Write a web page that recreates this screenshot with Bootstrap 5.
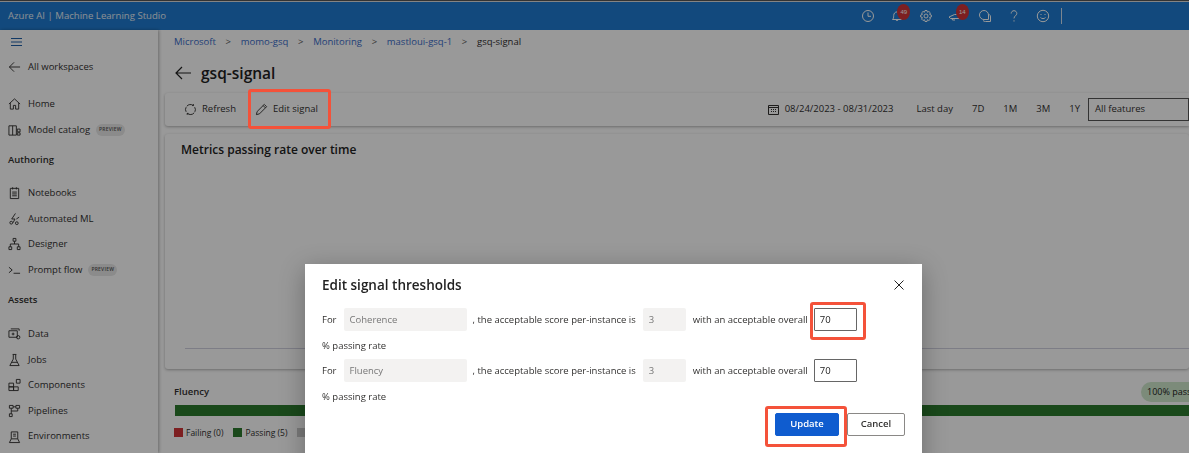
<!DOCTYPE html>
<html lang="en">
<head>
<meta charset="utf-8">
<title>gsq-signal</title>
<link rel="stylesheet" href="https://cdn.jsdelivr.net/npm/bootstrap@5.3.0/dist/css/bootstrap.min.css">
<style>
html,body{height:453px;overflow:hidden;}
body{font-family:"Open Sans","Noto Sans",sans-serif;font-size:9.5px;color:#323130;background:#fff;}
.topline{height:2px;background:#555;border-bottom:1px solid #ddd;}
.studio-bar{height:28px;background:#1f7bd0;padding:0 0 0 8px;color:#fff;flex-wrap:nowrap;}
.studio-brand{font-size:9.6px;color:#e6eef6;margin:0;padding:0;}
.bar-tools{gap:0;margin-right:127px;}
.bar-tool{width:29.3px;display:flex;justify-content:center;position:relative;}
.bar-tool svg{width:14px;height:14px;fill:none;stroke:#fff;stroke-width:1;}
.bar-badge{position:absolute;top:-5px;left:15px;width:13px;height:16px;border-radius:50%;background:#d13438;color:#fff;font-size:6px;display:flex;align-items:center;justify-content:center;font-family:"Liberation Sans",sans-serif;}
.bar-sep{width:1px;height:16px;background:#cfe0f0;margin-left:3px;}
.page-wrap{height:423px;}
.side-nav{width:158px;flex:none;background:#fff;box-shadow:1px 0 3px rgba(0,0,0,.3);padding-left:8px;color:#323130;position:relative;}
.ham{height:14.5px;margin-top:5px;display:flex;align-items:center;padding-left:3px;}
.ham svg{width:11px;height:8px;stroke:#1f5fa8;stroke-width:1;}
.side-row{height:25.6px;display:flex;align-items:center;gap:7px;font-size:9.5px;white-space:nowrap;}
.side-row svg{width:13px;height:14px;flex:none;fill:none;stroke:#323130;stroke-width:1;}
.side-head{font-weight:600;height:25.6px;display:flex;align-items:center;font-size:9.5px;}
.side-gap-a{margin-top:5px;margin-bottom:11.5px;}
.side-head-a{margin-top:5px;margin-bottom:7px;}
.side-head-b{margin-top:5px;margin-bottom:8px;}
.preview-tag{font-size:5px;background:#e8e8e8;border-radius:8px;padding:2px 3px;color:#555;letter-spacing:.2px;font-weight:600;margin-left:-1px;}
.main-col{min-width:0;padding-left:7px;}
.crumbs{--bs-breadcrumb-divider:'>';--bs-breadcrumb-margin-bottom:0;--bs-breadcrumb-item-padding-x:9.7px;height:23px;margin:0;padding:5px 0 0 9px;font-size:9.5px;flex-wrap:nowrap;}
.crumbs .breadcrumb-item a{color:#3a6cc8;text-decoration:none;}
.crumbs .breadcrumb-item.active{color:#323130;}
.crumbs .breadcrumb-item+.breadcrumb-item::before{color:#555;}
.title-row{height:40px;padding-left:10px;gap:10px;}
.title-row svg{width:16px;height:14px;stroke:#222;stroke-width:1.2;fill:none;}
.title-row h1{font-size:15.5px;font-weight:600;margin:0;color:#222;}
.tool-card{height:33px;background:#fff;border-radius:3px 0 0 3px;box-shadow:0 1px 3px rgba(0,0,0,.3);padding-left:19px;margin-bottom:8px;}
.tool-btn{font-size:9.5px;padding:0;border:0;display:flex;align-items:center;gap:5px;color:#323130;background:none;border-radius:0;}
.tool-btn svg{width:13px;height:13px;fill:none;stroke:#323130;stroke-width:1;}
.edit-gap{margin-left:19px;}
.range{margin-left:auto;gap:0;}
.range-date{gap:6px;margin-right:23px;}
.range-date svg{width:11px;height:11px;fill:none;stroke:#323130;stroke-width:1;}
.range-pill{margin-right:19px;}
.range-pill:last-of-type{margin-right:7px;}
.feat-select{width:101px;height:23px;border:1px solid #555;background:#fff;padding:0 6px;display:flex;align-items:center;font-size:9.5px;margin-left:1px;}
.chart-card{height:235px;background:#fff;border-radius:3px;box-shadow:0 1px 3px rgba(0,0,0,.3);padding:8px 0 0 16px;display:flex;flex-direction:column;margin-bottom:5px;}
.chart-card h2{font-size:12px;font-weight:600;margin:0;color:#222;line-height:16px;}
.chart-axis{margin-top:auto;margin-bottom:20px;height:1px;background:#d0d0e0;margin-left:4px;}
.fluency-card{height:90px;background:#fff;border-radius:3px;padding:8px 0 0 9px;}
.fluency-head{height:20px;font-weight:600;font-size:9.5px;}
.pass-pill{background:#cfe8cc;border-radius:10px 0 0 10px;height:20px;width:48px;padding-left:6px;font-size:9px;font-weight:400;display:flex;align-items:center;white-space:nowrap;color:#222;flex:none;}
.pass-track{height:11px;background:#2c7a2e;border-radius:0;margin:3px 0 11px 1px;}
.legend-row{gap:10px;font-size:8.5px;}
.legend-key{width:9px;height:9px;display:inline-block;margin-right:3px;vertical-align:-1px;}
.key-red{background:#d13438;}.key-green{background:#2c7a2e;}.key-grey{background:#ccc;}
.modal-backdrop.show{opacity:.4;}
.sig-dialog{position:absolute;left:305px;top:264px;width:617px;height:205px;z-index:1060;background:#fff;border:0;border-radius:0;padding:11px 17px;box-shadow:0 6px 24px rgba(0,0,0,.3);font-size:9.5px;color:#323130;}
.sig-head{height:20px;margin-bottom:13px;}
.sig-head h3{font-size:13.5px;font-weight:600;margin:0;color:#222;}
.sig-x{width:10px;height:10px;padding:0;border:0;background:none;margin-right:1px;display:flex;}
.sig-x svg{width:10px;height:10px;stroke:#222;stroke-width:1;}
.sig-row{height:23px;gap:0;white-space:nowrap;}
.sig-txt{padding-top:2px;}
.sig-ro{height:23px;background:#f3f2f1;border:0;border-radius:2px;font-size:9.5px;padding:2px 6px 0;color:#777;display:flex;align-items:center;}
.sig-ro.lg{width:123px;margin:0 6px 0 7px;}
.sig-ro.sm{width:43px;margin:0 7px;}
.sig-in{width:43px;height:23px;border:1px solid #666;border-radius:1px;padding:0 5px;font-size:9.5px;color:#222;margin-left:6px;min-height:0;box-shadow:none;}
.sig-line{height:27.5px;display:flex;align-items:center;padding-top:3px;}
.sig-actions{gap:8px;margin-top:3.5px;margin-right:0;}
.sig-primary{--bs-btn-bg:#0f5ccf;--bs-btn-border-color:#0f5ccf;width:64px;height:23px;padding:0;font-size:9.5px;font-weight:600;border-radius:2px;}
.sig-cancel{width:58px;height:23px;padding:0;font-size:9.5px;font-weight:600;border:1px solid #8a8886;border-radius:2px;background:#fff;color:#323130;}
.mark-box{position:absolute;border:3px solid #f4523a;border-radius:3px;z-index:1070;pointer-events:none;}
.mark-edit{left:248px;top:89px;width:83px;height:40px;}
.mark-seventy{left:810px;top:302px;width:56px;height:38px;}
.mark-update{left:765px;top:406px;width:82px;height:41px;}
</style>
</head>
<body>
<div class="topline"></div>
<nav class="navbar studio-bar d-flex justify-content-between align-items-center">
  <span class="navbar-brand studio-brand">Azure AI | Machine Learning Studio</span>
  <div class="d-flex align-items-center bar-tools">
    <span class="bar-tool"><svg viewBox="0 0 14 14"><circle cx="7" cy="7" r="5.5"/><path d="M7 3.5V7.3H10"/></svg></span>
    <span class="bar-tool"><svg viewBox="0 0 14 14"><path d="M2.5 10.5c1-1 1.2-2 1.2-4 0-2 1.4-3.6 3.3-3.6s3.300 1.600 3.300 3.600c0 2 .2 3 1.200 4z"/><path d="M5.800 10.800a1.300 1.300 0 0 0 2.400 0"/></svg><span class="bar-badge">49</span></span>
    <span class="bar-tool"><svg viewBox="0 0 14 14"><circle cx="7" cy="7" r="2"/><path d="M6 1.500h2l.4 1.700 1.500-.7 1.500 1.400-.8 1.500 1.700.6v2l-1.700.5.800 1.600-1.500 1.400-1.500-.8-.4 1.800H6l-.5-1.800-1.500.8-1.400-1.400.8-1.600-1.700-.5V6l1.700-.6-.8-1.500L4 2.500l1.500.7z"/></svg></span>
    <span class="bar-tool"><svg viewBox="0 0 14 14"><path d="M1 8l5.500-2.500h2l3 .5v3.500H2.500z"/><path d="M4 9.500l.5 1.500h2.500"/></svg><span class="bar-badge">14</span></span>
    <span class="bar-tool"><svg viewBox="0 0 14 14"><path d="M6 1.500a4.500 4.500 0 1 0 0 9h4.500V6A4.500 4.500 0 0 0 6 1.500z"/><path d="M11.500 5.500c.7.700 1 1.500 1 2.500v4.500H7.500c-1 0-1.800-.3-2.500-1"/></svg></span>
    <span class="bar-tool"><svg viewBox="0 0 14 14"><path d="M4.200 4.500C4.200 2.800 5.500 1.700 7 1.700s2.800 1.100 2.800 2.700c0 2.300-2.800 2.500-2.800 5"/><path d="M7 11.300v1.200"/></svg></span>
    <span class="bar-tool"><svg viewBox="0 0 14 14"><circle cx="7" cy="7" r="5.700"/><path d="M4.500 8.500c1.200 1.500 3.800 1.500 5 0M5 5v1M9 5v1"/></svg></span>
    <span class="bar-sep"></span>
  </div>
</nav>
<div class="d-flex page-wrap">
  <aside class="side-nav">
    <div class="ham"><svg viewBox="0 0 11 8"><path d="M0 .5h11M0 4h11M0 7.500h11"/></svg></div>
    <div class="side-row side-gap-a"><svg viewBox="0 0 14 14"><path d="M13 7H1.500M6.500 2L1.500 7l5 5"/></svg>All workspaces</div>
    <div class="side-row"><svg viewBox="0 0 14 14"><path d="M1 7l6-5.500L13 7M2.500 6v6.500h3.300V8.500h2.400v4h3.300V6"/></svg>Home</div>
    <div class="side-row"><svg viewBox="0 0 14 14"><path d="M1 2.500h8v10H1zM5 2.500v10"/><path d="M10 6h3v3h-3zM10 10h3v2.500h-3z"/></svg>Model catalog <span class="preview-tag">PREVIEW</span></div>
    <div class="side-head side-head-a">Authoring</div>
    <div class="side-row"><svg viewBox="0 0 14 14"><path d="M2.500 2h9v11h-9zM5 .8v2.400M9 .8v2.400M4.500 6h5M4.500 8h5M4.500 10h5"/></svg>Notebooks</div>
    <div class="side-row"><svg viewBox="0 0 14 14"><path d="M8 1L4 7h3.500L5.500 11M9 7l3-2M2 11a1.500 1.500 0 1 0 3 0 1.500 1.500 0 1 0-3 0M8 11.500a1.500 1.500 0 1 0 3 0 1.500 1.500 0 1 0-3 0"/></svg>Automated ML</div>
    <div class="side-row"><svg viewBox="0 0 14 14"><path d="M5.500 1h3v3h-3zM1 10h3v3H1zM10 10h3v3h-3zM7 4v3M2.500 10V7h9v3"/></svg>Designer</div>
    <div class="side-row"><svg viewBox="0 0 14 14"><path d="M1 4l3.500 3L1 10M6 10.500h7"/></svg>Prompt flow <span class="preview-tag">PREVIEW</span></div>
    <div class="side-head side-head-b">Assets</div>
    <div class="side-row"><svg viewBox="0 0 14 14"><path d="M1 3.500h9v7H1zM3 1.500h9v2M4 7h3M5.500 5.500v3"/><circle cx="11" cy="10.500" r="1.800"/></svg>Data</div>
    <div class="side-row"><svg viewBox="0 0 14 14"><path d="M5 1h4M5.700 1v5L2 13h10L8.300 6V1M4 9.500h6"/></svg>Jobs</div>
    <div class="side-row"><svg viewBox="0 0 14 14"><path d="M1 5h5v4H1zM1 9h5v4H1zM6 9h5v4H6zM9 1h4v4H9z"/></svg>Components</div>
    <div class="side-row"><svg viewBox="0 0 14 14"><path d="M1.500 1h4v3h-4zM8.500 1h4v3h-4zM1.500 10h3v3h-3zM3.500 4v6M5.500 2.500h3M3.500 7h7V4"/></svg>Pipelines</div>
    <div class="side-row"><svg viewBox="0 0 14 14"><path d="M3.500 1.500h7v7.500h-7zM3.500 9L1.500 13h11l-2-4M5.500 4h3M5.500 6h3"/></svg>Environments</div>
  </aside>
  <main class="main-col flex-grow-1">
    <nav aria-label="breadcrumb">
      <ol class="breadcrumb crumbs">
        <li class="breadcrumb-item"><a href="#">Microsoft</a></li>
        <li class="breadcrumb-item"><a href="#">momo-gsq</a></li>
        <li class="breadcrumb-item"><a href="#">Monitoring</a></li>
        <li class="breadcrumb-item"><a href="#">mastloui-gsq-1</a></li>
        <li class="breadcrumb-item active" aria-current="page">gsq-signal</li>
      </ol>
    </nav>
    <div class="d-flex align-items-center title-row">
      <svg viewBox="0 0 16 14"><path d="M16 7H1M7 1L1 7l6 6"/></svg>
      <h1>gsq-signal</h1>
    </div>
    <div class="d-flex align-items-center tool-card">
      <button class="btn tool-btn" type="button"><svg viewBox="0 0 14 14"><path d="M3 3.500a5 5 0 0 1 7-.8M11.500 4.500a5 5 0 0 1 .2 5M11 10.500a5 5 0 0 1-7.500.5M2.300 9.500a5 5 0 0 1 0-5M8.800 2.800l1.500-.1-.2-1.500M4.800 11.200l-1.500.1.200 1.500"/></svg>Refresh</button>
      <button class="btn tool-btn edit-gap" type="button"><svg viewBox="0 0 14 14"><path d="M1.500 12.500l.8-3.300L10 1.500l2.500 2.500-7.700 7.700zM8.800 2.800l2.400 2.400"/></svg>Edit signal</button>
      <div class="d-flex align-items-center range">
        <span class="d-flex align-items-center range-date"><svg viewBox="0 0 11 11"><path d="M.5 1.500h10v9H.5zM.5 3.500h10M3 5.500h1M5 5.500h1M7 5.500h1M3 7.500h1M5 7.500h1M7 7.500h1"/></svg>08/24/2023 - 08/31/2023</span>
        <span class="range-pill">Last day</span>
        <span class="range-pill">7D</span>
        <span class="range-pill">1M</span>
        <span class="range-pill">3M</span>
        <span class="range-pill">1Y</span>
        <div class="feat-select">All features</div>
      </div>
    </div>
    <section class="chart-card">
      <h2>Metrics passing rate over time</h2>
      <div class="chart-axis"></div>
    </section>
    <section class="fluency-card">
      <div class="d-flex justify-content-between align-items-center fluency-head">
        <span>Fluency</span>
        <span class="pass-pill">100% pass</span>
      </div>
      <div class="pass-track"></div>
      <div class="d-flex legend-row">
        <span><i class="legend-key key-red"></i>Failing (0)</span>
        <span><i class="legend-key key-green"></i>Passing (5)</span>
        <span><i class="legend-key key-grey"></i>Not applicable (0)</span>
      </div>
    </section>
  </main>
</div>
<div class="modal-backdrop show"></div>
<div class="modal-content sig-dialog" role="dialog" aria-label="Edit signal thresholds">
  <div class="d-flex justify-content-between align-items-center sig-head">
    <h3>Edit signal thresholds</h3>
    <button class="sig-x" type="button" aria-label="Close"><svg viewBox="0 0 10 10"><path d="M.5 .5l9 9M9.500 .5l-9 9"/></svg></button>
  </div>
  <div class="d-flex align-items-center sig-row"><span class="sig-txt">For</span><span class="sig-ro lg">Coherence</span><span class="sig-txt">, the acceptable score per-instance is</span><span class="sig-ro sm">3</span><span class="sig-txt">with an acceptable overall</span><input class="form-control sig-in" value="70" aria-label="Coherence threshold"></div>
  <div class="sig-line">% passing rate</div>
  <div class="d-flex align-items-center sig-row"><span class="sig-txt">For</span><span class="sig-ro lg">Fluency</span><span class="sig-txt">, the acceptable score per-instance is</span><span class="sig-ro sm">3</span><span class="sig-txt">with an acceptable overall</span><input class="form-control sig-in" value="70" aria-label="Fluency threshold"></div>
  <div class="sig-line">% passing rate</div>
  <div class="d-flex justify-content-end sig-actions">
    <button class="btn btn-primary sig-primary" type="button">Update</button>
    <button class="btn sig-cancel" type="button">Cancel</button>
  </div>
</div>
<div class="mark-box mark-edit"></div>
<div class="mark-box mark-seventy"></div>
<div class="mark-box mark-update"></div>
<script src="https://cdn.jsdelivr.net/npm/bootstrap@5.3.0/dist/js/bootstrap.bundle.min.js"></script>
</body>
</html>
